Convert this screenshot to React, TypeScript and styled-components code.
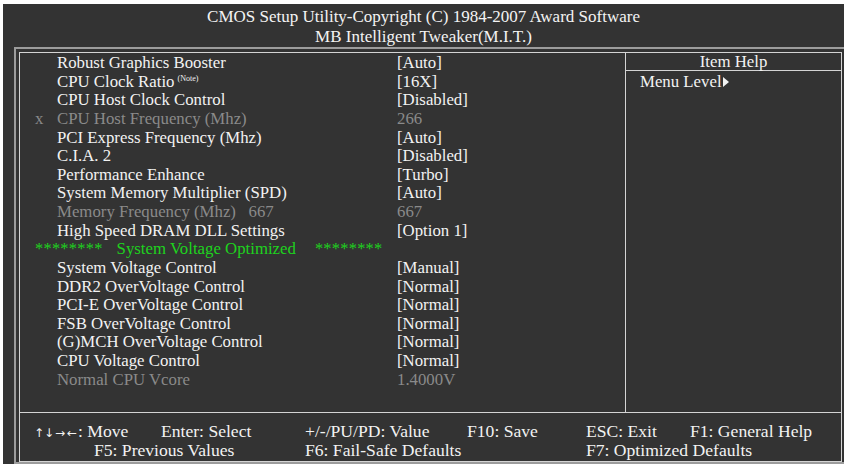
import React from "react";
import styled, { createGlobalStyle } from "styled-components";

const Global = createGlobalStyle`
  html, body { margin: 0; padding: 0; background: #ffffff; overflow: hidden; }
  body { width: 844px; height: 467px; }
`;

const Screen = styled.div`
  margin: 4px 0 0 3px;
  width: 841px;
  height: 460px;
  background: #333333;
  overflow: hidden;
  font-family: "Liberation Serif", "Times New Roman", serif;
  color: #f2f2f2;
`;

const Title = styled.div`
  padding-top: 3px;
  height: 40px;
  text-align: center;
  font-size: 17px;
  line-height: 20px;
  color: #f4f4f4;
`;

const Frame = styled.div`
  margin-left: 11px;
  width: 836px;
  height: 410px;
  border: 2px solid #9c9c9c;
  padding: 3px 0 0 3px;
`;

const Panel = styled.div`
  width: 821px;
  height: 408px;
  border: 1px solid #d4d4d4;
  display: flex;
  flex-direction: column;
`;

const Main = styled.div`
  flex: 0 0 359px;
  display: flex;
  border-bottom: 1px solid #d4d4d4;
`;

const List = styled.div`
  flex: 0 0 605px;
  padding-top: 1px;
  border-right: 1px solid #d4d4d4;
`;

const Row = styled.div<{ $muted?: boolean }>`
  display: grid;
  grid-template-columns: 15px 22px 340px 1fr;
  height: 18.63px;
  line-height: 18.63px;
  font-size: 16.8px;
  white-space: nowrap;
  color: ${(p) => (p.$muted ? "#8a8a8a" : "#f2f2f2")};
`;

const Mark = styled.span`
  grid-column: 2;
`;

const Label = styled.span`
  grid-column: 3;
`;

const Value = styled.span`
  grid-column: 4;
`;

const Note = styled.sup`
  font-size: 8px;
  vertical-align: 6px;
  line-height: 0;
  margin-left: 3px;
`;

const GreenRow = styled.div`
  display: flex;
  align-items: center;
  padding-left: 15px;
  height: 18.63px;
  line-height: 18.63px;
  font-size: 16.8px;
  white-space: nowrap;
  color: #1ed21e;
`;

const Stars = styled.span<{ $gap: number }>`
  margin-right: ${(p) => p.$gap}px;
  font-size: 16.5px;
  letter-spacing: 0.2px;
`;

const GreenText = styled.span`
  margin-right: 19px;
`;

const Help = styled.div`
  flex: 1;
  display: flex;
  flex-direction: column;
`;

const HelpHead = styled.div`
  height: 17px;
  line-height: 17px;
  border-bottom: 1px solid #d4d4d4;
  text-align: center;
  font-size: 16.8px;
`;

const HelpBody = styled.div`
  padding: 2px 0 0 14px;
  line-height: 18px;
  font-size: 16.8px;
  display: flex;
  align-items: center;
`;

const Footer = styled.div`
  flex: 1;
  padding: 9px 0 0 14px;
  font-size: 17.6px;
`;

const FootRow = styled.div<{ $indent?: number }>`
  display: flex;
  height: 19px;
  line-height: 19px;
  white-space: nowrap;
  padding-left: ${(p) => p.$indent ?? 0}px;
`;

const Key = styled.span<{ $w?: number }>`
  flex: 0 0 ${(p) => (p.$w ? `${p.$w}px` : "auto")};
`;

const ArrowKey = styled.span<{ $w: number }>`
  display: inline-block;
  width: ${(p) => p.$w}px;
  text-align: center;
  font-family: "DejaVu Sans", sans-serif;
  font-size: 12px;
`;

const Arrow = () => (
  <svg width="6" height="10" viewBox="0 0 6 10" style={{ marginLeft: 1 }}>
    <polygon points="0,0 6,5 0,10" fill="#f2f2f2" />
  </svg>
);

type Item = { label: React.ReactNode; value: string; muted?: boolean; mark?: string };

const top: Item[] = [
  { label: "Robust Graphics Booster", value: "[Auto]" },
  { label: <>CPU Clock Ratio<Note>(Note)</Note></>, value: "[16X]" },
  { label: "CPU Host Clock Control", value: "[Disabled]" },
  { label: "CPU Host Frequency (Mhz)", value: "266", muted: true, mark: "x" },
  { label: "PCI Express Frequency (Mhz)", value: "[Auto]" },
  { label: "C.I.A. 2", value: "[Disabled]" },
  { label: "Performance Enhance", value: "[Turbo]" },
  { label: "System Memory Multiplier (SPD)", value: "[Auto]" },
  { label: <>Memory Frequency (Mhz)&nbsp;&nbsp;&nbsp;667</>, value: "667", muted: true },
  { label: "High Speed DRAM DLL Settings", value: "[Option 1]" },
];

const bottom: Item[] = [
  { label: "System Voltage Control", value: "[Manual]" },
  { label: "DDR2 OverVoltage Control", value: "[Normal]" },
  { label: "PCI-E OverVoltage Control", value: "[Normal]" },
  { label: "FSB OverVoltage Control", value: "[Normal]" },
  { label: "(G)MCH OverVoltage Control", value: "[Normal]" },
  { label: "CPU Voltage Control", value: "[Normal]" },
  { label: "Normal CPU Vcore", value: "1.4000V", muted: true },
];

const renderRow = (it: Item, i: number) => (
  <Row key={i} $muted={it.muted}>
    <Mark>{it.mark ?? ""}</Mark>
    <Label>{it.label}</Label>
    <Value>{it.value}</Value>
  </Row>
);

export default function App() {
  return (
    <>
      <Global />
      <Screen>
        <Title>
          <div>CMOS Setup Utility-Copyright (C) 1984-2007 Award Software</div>
          <div>MB Intelligent Tweaker(M.I.T.)</div>
        </Title>
        <Frame>
          <Panel>
            <Main>
              <List>
                {top.map(renderRow)}
                <GreenRow>
                  <Stars $gap={14}>********</Stars>
                  <GreenText>System Voltage Optimized</GreenText>
                  <Stars $gap={0}>********</Stars>
                </GreenRow>
                {bottom.map(renderRow)}
              </List>
              <Help>
                <HelpHead>Item Help</HelpHead>
                <HelpBody>
                  Menu Level
                  <Arrow />
                </HelpBody>
              </Help>
            </Main>
            <Footer>
              <FootRow>
                <Key $w={127}>
                  <ArrowKey $w={10}>↑</ArrowKey>
                  <ArrowKey $w={10}>↓</ArrowKey>
                  <ArrowKey $w={12}>→</ArrowKey>
                  <ArrowKey $w={12}>←</ArrowKey>: Move
                </Key>
                <Key $w={144}>Enter: Select</Key>
                <Key $w={162}>+/-/PU/PD: Value</Key>
                <Key $w={119}>F10: Save</Key>
                <Key $w={104}>ESC: Exit</Key>
                <Key>F1: General Help</Key>
              </FootRow>
              <FootRow $indent={60}>
                <Key $w={211}>F5: Previous Values</Key>
                <Key $w={281}>F6: Fail-Safe Defaults</Key>
                <Key>F7: Optimized Defaults</Key>
              </FootRow>
            </Footer>
          </Panel>
        </Frame>
      </Screen>
    </>
  );
}
